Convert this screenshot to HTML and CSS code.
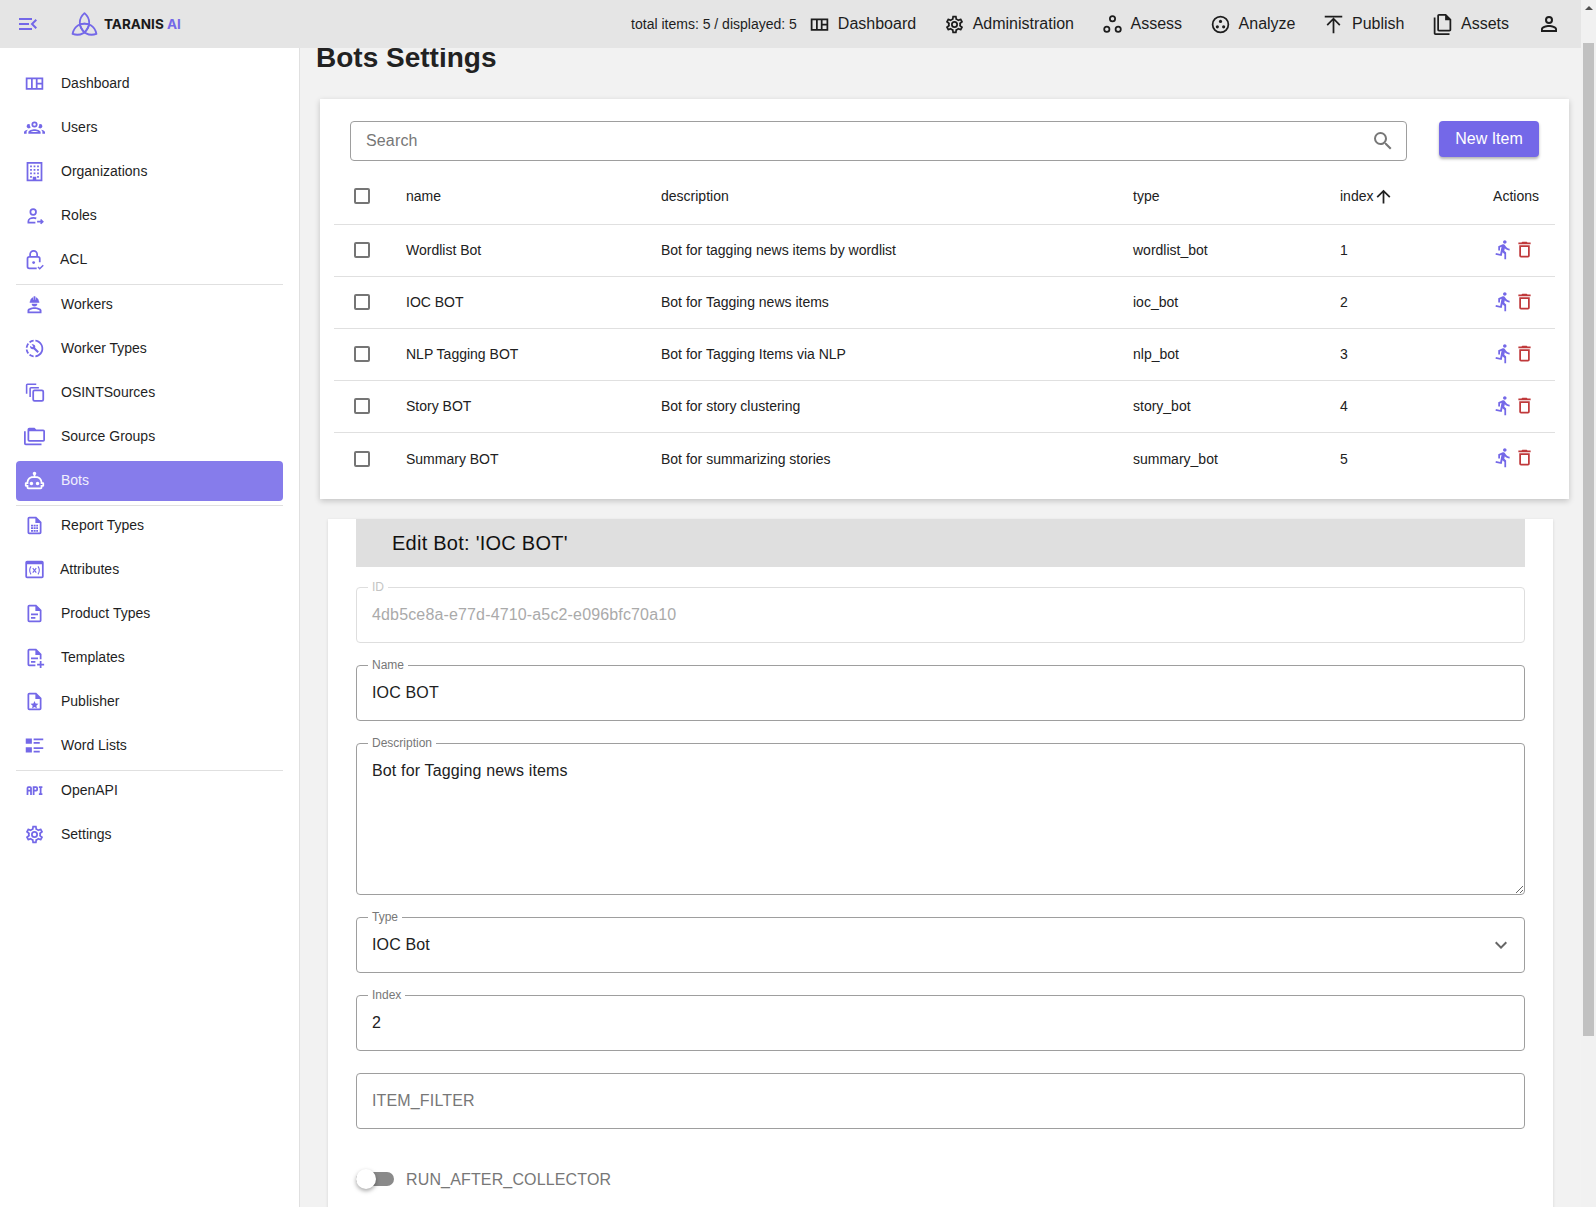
FILE: index.html

```html
<!DOCTYPE html>
<html lang="en">
<head>
    <meta charset="UTF-8">
    <meta name="viewport" content="width=device-width, initial-scale=1.0">
    <title>Bots Settings - Taranis AI</title>
    <link rel="stylesheet" href="styles.css">
</head>
<body>
    <!-- icons used more than once -->
    <svg class="sprite" xmlns="http://www.w3.org/2000/svg">
        <symbol id="i-dashboard" viewBox="0 0 24 24"><path fill-rule="evenodd" d="M2 5H22V19H2ZM4 7V17H8V7ZM10 7V17H13.500V7ZM15.500 7V11H20V7ZM15.500 13V17H20V13Z"/></symbol>
        <symbol id="i-cog" viewBox="0 0 24 24"><path d="M12,8A4,4 0 0,1 16,12A4,4 0 0,1 12,16A4,4 0 0,1 8,12A4,4 0 0,1 12,8M12,10A2,2 0 0,0 10,12A2,2 0 0,0 12,14A2,2 0 0,0 14,12A2,2 0 0,0 12,10M10,22C9.75,22 9.54,21.82 9.5,21.58L9.13,18.93C8.5,18.68 7.96,18.34 7.44,17.94L4.95,18.95C4.73,19.03 4.46,18.95 4.34,18.73L2.34,15.27C2.21,15.05 2.27,14.78 2.46,14.63L4.57,12.97L4.5,12L4.57,11L2.46,9.37C2.27,9.22 2.21,8.95 2.34,8.73L4.34,5.27C4.46,5.05 4.73,4.96 4.95,5.05L7.44,6.05C7.96,5.66 8.5,5.32 9.13,5.07L9.5,2.42C9.54,2.18 9.75,2 10,2H14C14.25,2 14.46,2.18 14.5,2.42L14.87,5.07C15.5,5.32 16.04,5.66 16.56,6.05L19.05,5.05C19.27,4.96 19.54,5.05 19.66,5.27L21.66,8.73C21.79,8.95 21.73,9.22 21.54,9.37L19.43,11L19.5,12L19.43,13L21.54,14.63C21.73,14.78 21.79,15.05 21.66,15.27L19.66,18.73C19.54,18.95 19.27,19.04 19.05,18.95L16.56,17.95C16.04,18.34 15.5,18.68 14.87,18.93L14.5,21.58C14.46,21.82 14.25,22 14,22H10M11.25,4L10.88,6.61C9.68,6.86 8.62,7.5 7.85,8.39L5.44,7.35L4.69,8.65L6.8,10.2C6.4,11.37 6.4,12.64 6.8,13.8L4.68,15.36L5.43,16.66L7.86,15.62C8.63,16.5 9.68,17.14 10.87,17.38L11.24,20H12.76L13.13,17.39C14.32,17.14 15.37,16.5 16.14,15.62L18.57,16.66L19.32,15.36L17.2,13.81C17.6,12.64 17.6,11.37 17.2,10.2L19.31,8.65L18.56,7.35L16.15,8.39C15.38,7.5 14.32,6.86 13.12,6.62L12.75,4H11.25Z"/></symbol>
        <symbol id="i-run" viewBox="0 0 24 24"><path d="M13.5,5.5C14.59,5.5 15.5,4.59 15.5,3.5C15.5,2.39 14.59,1.5 13.5,1.5C12.39,1.5 11.5,2.39 11.5,3.5C11.5,4.59 12.39,5.5 13.5,5.5M9.89,19.38L10.89,15L13,17V23H15V15.5L12.89,13.5L13.5,10.5C14.79,12 16.79,13 19,13V11C17.09,11 15.5,10 14.69,8.58L13.69,7C13.29,6.38 12.69,6 12,6C11.69,6 11.5,6.08 11.19,6.08L6,8.28V13H8V9.58L9.79,8.88L8.19,17L3.29,16L2.89,18L9.89,19.38Z"/></symbol>
        <symbol id="i-delete" viewBox="0 0 24 24"><path d="M6,19A2,2 0 0,0 8,21H16A2,2 0 0,0 18,19V7H6V19M8,9H16V19H8V9M15.5,4L14.5,3H9.5L8.5,4H5V6H19V4H15.5Z"/></symbol>
    </svg>

    <div class="app">
        <div class="viewport">
            <header class="topbar">
                <svg class="icon-24 menu-toggle" viewBox="0 0 24 24"><path d="M21,15.61L19.59,17L14.58,12L19.59,7L21,8.39L17.44,12L21,15.61M3,6H16V8H3V6M3,13V11H13V13H3M3,18V16H16V18H3Z"/></svg>
                <div class="logo">
                    <svg class="logo-mark line" viewBox="0 0 27 25" stroke-width="1.800" stroke-linejoin="round">
                        <path d="M13.500 1.200C19.500 6.500 20 14 13.500 20.500C7 14 7.500 6.500 13.500 1.200Z"/>
                        <path d="M13.500 1.200C19.500 6.500 20 14 13.500 20.500C7 14 7.500 6.500 13.500 1.200Z" transform="rotate(120 13.500 15)"/>
                        <path d="M13.500 1.200C19.500 6.500 20 14 13.500 20.500C7 14 7.500 6.500 13.500 1.200Z" transform="rotate(240 13.500 15)"/>
                    </svg>
                    <span class="logo-name">TARANIS <span class="logo-ai">AI</span></span>
                </div>
                <div class="topbar-right">
                    <span class="item-count">total items: 5 / displayed: 5</span>
                    <a class="top-link"><svg class="icon-21"><use href="#i-dashboard"/></svg>Dashboard</a>
                    <a class="top-link"><svg class="icon-21"><use href="#i-cog"/></svg>Administration</a>
                    <a class="top-link"><svg class="icon-21 line" viewBox="0 0 24 24" stroke-width="2"><circle cx="12" cy="5.5" r="3"/><circle cx="5.5" cy="17.5" r="3"/><circle cx="18.5" cy="17.5" r="3"/></svg>Assess</a>
                    <a class="top-link"><svg class="icon-21" viewBox="0 0 24 24"><path fill-rule="evenodd" d="M12 2a10 10 0 1 0 0 20a10 10 0 1 0 0-20ZM12 4a8 8 0 1 1 0 16a8 8 0 1 1 0-16Z"/><circle cx="12" cy="8.5" r="1.8"/><circle cx="8.4" cy="14.7" r="1.8"/><circle cx="15.6" cy="14.7" r="1.8"/></svg>Analyze</a>
                    <a class="top-link"><svg class="icon-21" viewBox="0 0 24 24"><path d="M4.08,11.92L12,4L19.92,11.92L18.5,13.33L13,7.83V22H11V7.83L5.5,13.33L4.08,11.92M12,4H22V2H2V4H12Z"/></svg>Publish</a>
                    <a class="top-link"><svg class="icon-21" viewBox="0 0 24 24"><path d="M16 0H8C6.9 0 6 .9 6 2V18C6 19.1 6.9 20 8 20H20C21.1 20 22 19.1 22 18V6L16 0M20 18H8V2H15V7H20V18M4 4V22H20V24H4C2.9 24 2 23.1 2 22V4H4Z"/></svg>Assets</a>
                    <svg class="icon-24 account" viewBox="0 0 24 24"><path d="M12,4A4,4 0 0,1 16,8A4,4 0 0,1 12,12A4,4 0 0,1 8,8A4,4 0 0,1 12,4M12,6A2,2 0 0,0 10,8A2,2 0 0,0 12,10A2,2 0 0,0 14,8A2,2 0 0,0 12,6M12,13C14.67,13 20,14.33 20,17V20H4V17C4,14.33 9.33,13 12,13M12,14.9C9.03,14.9 5.9,16.36 5.9,17V18.1H18.1V17C18.1,16.36 14.97,14.9 12,14.9Z"/></svg>
                </div>
            </header>

            <div class="below">
                <nav class="sidebar">
                    <a class="nav-item"><svg class="icon-21"><use href="#i-dashboard"/></svg>Dashboard</a>
                    <a class="nav-item"><svg class="icon-21" viewBox="0 0 24 24"><path d="M12,5A3.5,3.5 0 0,0 8.5,8.5A3.5,3.5 0 0,0 12,12A3.5,3.5 0 0,0 15.5,8.5A3.5,3.5 0 0,0 12,5M12,7A1.5,1.5 0 0,1 13.5,8.5A1.5,1.5 0 0,1 12,10A1.5,1.5 0 0,1 10.5,8.5A1.5,1.5 0 0,1 12,7M5.5,8A2.5,2.5 0 0,0 3,10.5C3,11.44 3.53,12.25 4.29,12.68C4.65,12.88 5.06,13 5.5,13C5.94,13 6.35,12.88 6.71,12.68C7.08,12.47 7.39,12.17 7.62,11.81C6.89,10.86 6.5,9.7 6.5,8.5C6.5,8.41 6.5,8.31 6.5,8.22C6.2,8.08 5.86,8 5.5,8M18.5,8C18.14,8 17.8,8.08 17.5,8.22C17.5,8.31 17.5,8.41 17.5,8.5C17.5,9.7 17.11,10.86 16.38,11.81C16.5,12 16.63,12.15 16.78,12.3C16.94,12.45 17.1,12.58 17.29,12.68C17.65,12.88 18.06,13 18.5,13C18.94,13 19.35,12.88 19.71,12.68C20.47,12.25 21,11.44 21,10.5A2.5,2.5 0 0,0 18.5,8M12,14C9.66,14 5,15.17 5,17.5V19H19V17.5C19,15.17 14.34,14 12,14M4.71,14.55C2.78,14.78 0,15.76 0,17.5V19H3V17.07C3,16.06 3.69,15.22 4.71,14.55M19.29,14.55C20.31,15.22 21,16.06 21,17.07V19H24V17.5C24,15.76 21.22,14.78 19.29,14.55M12,16C13.53,16 15.24,16.5 16.23,17H7.77C8.76,16.5 10.47,16 12,16Z"/></svg>Users</a>
                    <a class="nav-item"><svg class="icon-21" viewBox="0 0 24 24"><path fill-rule="evenodd" d="M3 1H21V23H3ZM5 3V21H10V18H14V21H19V3Z"/><path d="M7 5h2v2H7zM11 5h2v2h-2zM15 5h2v2h-2zM7 9h2v2H7zM11 9h2v2h-2zM15 9h2v2h-2zM7 13h2v2H7zM11 13h2v2h-2zM15 13h2v2h-2zM7 17h2v2H7zM15 17h2v2h-2z"/></svg>Organizations</a>
                    <a class="nav-item"><svg class="icon-21 line" viewBox="0 0 24 24" stroke-width="2"><circle cx="10.5" cy="8" r="3.2"/><path d="M13 20H5v-1.5c0-2.2 3-3.7 6-3.7c1 0 2 .2 3 .5"/><path d="M15 19h6M19 16.5l2.5 2.5l-2.5 2.5" stroke-width="1.8"/></svg>Roles</a>
                    <a class="nav-item nav-item-tight"><svg class="icon-21 line" viewBox="0 0 24 24" stroke-width="2"><path d="M14.5 22H6a2 2 0 0 1-2-2V11a2 2 0 0 1 2-2h10a2 2 0 0 1 2 2v4"/><path d="M7 9V6a4 4 0 0 1 8 0v3"/><circle cx="11" cy="15.5" r="1.6" fill="currentColor" stroke="none"/><path d="M16 20.5l2 2l4-4" stroke-width="1.7"/></svg>ACL</a>
                    <div class="nav-divider"></div>
                    <a class="nav-item"><svg class="icon-21" viewBox="0 0 24 24"><path d="M7 8.5C7 6 8.8 4.300 10.500 3.800V6.500H11V2.500H13V6.500H13.500V3.800C15.200 4.300 17 6 17 8.500H17.500V10H6.500V8.500ZM8.800 11H15.200C15.200 13 13.800 14.200 12 14.200C10.200 14.200 8.800 13 8.800 11Z"/><path fill-rule="evenodd" d="M12 15C8.500 15 4 16.500 4 18.500V22H20V18.500C20 16.500 15.500 15 12 15ZM12 17C14.600 17 17 17.800 17.900 18.800V20H6.100V18.800C7 17.800 9.400 17 12 17Z"/></svg>Workers</a>
                    <a class="nav-item"><svg class="icon-21" viewBox="0 0 24 24"><path d="M13 2.03V4.05C17.39 4.59 20.5 8.58 19.96 12.97C19.5 16.61 16.64 19.5 13 19.93V21.93C18.5 21.38 22.5 16.5 21.95 11C21.5 6.25 17.73 2.5 13 2.03M11 2.06C9.05 2.25 7.19 3 5.67 4.26L7.1 5.74C8.22 4.84 9.57 4.26 11 4.06V2.06M4.26 5.67C3 7.19 2.25 9.04 2.05 11H4.05C4.24 9.58 4.8 8.23 5.69 7.1L4.26 5.67M2.06 13C2.26 14.96 3.03 16.81 4.27 18.33L5.69 16.9C4.81 15.77 4.24 14.42 4.06 13H2.06M7.1 18.37L5.67 19.74C7.18 21 9.04 21.79 11 22V20C9.58 19.82 8.23 19.25 7.1 18.37M16.82 15.19L12.71 11.08C13.12 10.04 12.89 8.82 12.03 7.97C11.13 7.06 9.78 6.88 8.69 7.38L10.63 9.32L9.28 10.68L7.29 8.73C6.75 9.82 7 11.17 7.88 12.08C8.74 12.94 9.96 13.16 11 12.76L15.11 16.86C15.29 17.05 15.56 17.05 15.74 16.86L16.78 15.83C17 15.65 17 15.33 16.82 15.19Z"/></svg>Worker Types</a>
                    <a class="nav-item"><svg class="icon-21 line" viewBox="0 0 24 24" stroke-width="1.800"><rect x="10.500" y="9.500" width="11.500" height="12" rx="1.500" stroke-width="2"/><path d="M7 17V7.500a1 1 0 0 1 1-1H17"/><path d="M3 13.500V3.500a1 1 0 0 1 1-1H14"/></svg>OSINTSources</a>
                    <a class="nav-item"><svg class="icon-21" viewBox="0 0 24 24"><path d="M22,4A2,2 0 0,1 24,6V16A2,2 0 0,1 22,18H6A2,2 0 0,1 4,16V4A2,2 0 0,1 6,2H12L14,4H22M2,6V20H20V22H2A2,2 0 0,1 0,20V11H0V6H2M6,6V16H22V6H6Z"/></svg>Source Groups</a>
                    <a class="nav-item active"><svg class="icon-21" viewBox="0 0 24 24"><path d="M17.5 15.5C17.5 16.61 16.61 17.5 15.5 17.5S13.5 16.61 13.5 15.5 14.4 13.5 15.5 13.5 17.5 14.4 17.5 15.5M8.5 13.5C7.4 13.5 6.5 14.4 6.5 15.5S7.4 17.5 8.5 17.5 10.5 16.61 10.5 15.5 9.61 13.5 8.5 13.5M23 15V18C23 18.55 22.55 19 22 19H21V20C21 21.11 20.11 22 19 22H5C3.9 22 3 21.11 3 20V19H2C1.45 19 1 18.55 1 18V15C1 14.45 1.45 14 2 14H3C3 10.13 6.13 7 10 7H11V5.73C10.4 5.39 10 4.74 10 4C10 2.9 10.9 2 12 2S14 2.9 14 4C14 4.74 13.6 5.39 13 5.73V7H14C17.87 7 21 10.13 21 14H22C22.55 14 23 14.45 23 15M21 16H19V14C19 11.24 16.76 9 14 9H10C7.24 9 5 11.24 5 14V16H3V17H5V20H19V17H21V16Z"/></svg>Bots</a>
                    <div class="nav-divider"></div>
                    <a class="nav-item"><svg class="icon-21" viewBox="0 0 24 24"><path d="M14,2H6A2,2 0 0,0 4,4V20A2,2 0 0,0 6,22H18A2,2 0 0,0 20,20V8L14,2M18,20H6V4H13V9H18V20Z"/><path d="M8 11h2.300v2H8zM11 11h2.300v2H11zM14 11h2v2h-2zM8 14h2.300v2H8zM11 14h2.300v2H11zM14 14h2v2h-2zM8 17h2.300v2H8zM11 17h2.300v2H11zM14 17h2v2h-2z"/></svg>Report Types</a>
                    <a class="nav-item nav-item-tight"><svg class="icon-21" viewBox="0 0 24 24"><path fill-rule="evenodd" d="M3.500 2H20.500A2 2 0 0 1 22.500 4V20A2 2 0 0 1 20.500 22H3.500A2 2 0 0 1 1.500 20V4A2 2 0 0 1 3.500 2ZM3.500 6V20H20.500V6Z"/><path d="M8 8.500C6.300 11 6.300 15 8 17.500" fill="none" stroke="currentColor" stroke-width="1.300"/><path d="M16 8.500C17.700 11 17.700 15 16 17.500" fill="none" stroke="currentColor" stroke-width="1.300"/><path d="M10 10.500L14 15.500M14 10.500L10 15.500" fill="none" stroke="currentColor" stroke-width="1.300"/></svg>Attributes</a>
                    <a class="nav-item"><svg class="icon-21" viewBox="0 0 24 24"><path d="M14,2H6A2,2 0 0,0 4,4V20A2,2 0 0,0 6,22H18A2,2 0 0,0 20,20V8L14,2M18,20H6V4H13V9H18V20Z"/><path d="M8 12h8v2H8zM8 16h5v2H8z"/></svg>Product Types</a>
                    <a class="nav-item"><svg class="icon-21" viewBox="0 0 24 24"><path d="M14,2H6A2,2 0 0,0 4,4V20A2,2 0 0,0 6,22H13V20H6V4H13V9H18V14H20V8L14,2Z"/><path d="M8 12h8v2H8zM8 16h5v2H8zM18 16h2v3h3v2h-3v3h-2v-3h-3v-2h3z"/></svg>Templates</a>
                    <a class="nav-item"><svg class="icon-21" viewBox="0 0 24 24"><path d="M14,2H6A2,2 0 0,0 4,4V20A2,2 0 0,0 6,22H18A2,2 0 0,0 20,20V8L14,2M18,20H6V4H13V9H18V20Z"/><path d="M12 11.500l1.300 2.900l3.200 .3l-2.400 2.100l.7 3.100l-2.800-1.600l-2.800 1.600l.7-3.100l-2.400-2.100l3.200-.3z"/></svg>Publisher</a>
                    <a class="nav-item"><svg class="icon-21" viewBox="0 0 24 24"><path d="M2 4h7v6H2zM2 14h7v6H2zM11 4h11v2H11zM11 8h7v2h-7zM11 14h11v2H11zM11 18h7v2h-7z"/></svg>Word Lists</a>
                    <div class="nav-divider"></div>
                    <a class="nav-item"><svg class="icon-21" viewBox="0 0 24 24"><path d="M7 7H5A2 2 0 0 0 3 9V17H5V13H7V17H9V9A2 2 0 0 0 7 7M7 11H5V9H7M14 7H10V17H12V13H14A2 2 0 0 0 16 11V9A2 2 0 0 0 14 7M14 11H12V9H14M20 9V15H21V17H17V15H18V9H17V7H21V9Z"/></svg>OpenAPI</a>
                    <a class="nav-item"><svg class="icon-21"><use href="#i-cog"/></svg>Settings</a>
                </nav>

                <main class="content">
                    <h1 class="page-title">Bots Settings</h1>

                    <section class="list-card">
                        <div class="list-toolbar">
                            <div class="search-box">
                                <span>Search</span>
                                <svg class="icon-24" viewBox="0 0 24 24"><path d="M9.5,3A6.5,6.5 0 0,1 16,9.5C16,11.11 15.41,12.59 14.44,13.73L14.71,14H15.5L20.5,19L19,20.5L14,15.5V14.71L13.73,14.44C12.59,15.41 11.11,16 9.5,16A6.5,6.5 0 0,1 3,9.5A6.5,6.5 0 0,1 9.5,3M9.5,5C7,5 5,7 5,9.5C5,12 7,14 9.5,14C12,14 14,12 14,9.5C14,7 12,5 9.5,5Z"/></svg>
                            </div>
                            <button class="btn-new">New Item</button>
                        </div>

                        <table class="bots-table">
                            <colgroup>
                                <col class="col-check"><col class="col-name"><col class="col-desc"><col class="col-type"><col class="col-index"><col>
                            </colgroup>
                            <thead>
                                <tr>
                                    <th class="cell-check"><span class="checkbox"></span></th>
                                    <th>name</th>
                                    <th>description</th>
                                    <th>type</th>
                                    <th><span class="sort-head">index<svg class="icon-21" viewBox="0 0 24 24"><path d="M13,20H11V8L5.5,13.5L4.08,12.08L12,4.16L19.92,12.08L18.5,13.5L13,8V20Z"/></svg></span></th>
                                    <th class="cell-actions">Actions</th>
                                </tr>
                            </thead>
                            <tbody>
                                <tr>
                                    <td class="cell-check"><span class="checkbox"></span></td>
                                    <td>Wordlist Bot</td>
                                    <td>Bot for tagging news items by wordlist</td>
                                    <td>wordlist_bot</td>
                                    <td>1</td>
                                    <td class="cell-actions"><span class="actions"><svg class="icon-21 run"><use href="#i-run"/></svg><svg class="icon-21 del"><use href="#i-delete"/></svg></span></td>
                                </tr>
                                <tr>
                                    <td class="cell-check"><span class="checkbox"></span></td>
                                    <td>IOC BOT</td>
                                    <td>Bot for Tagging news items</td>
                                    <td>ioc_bot</td>
                                    <td>2</td>
                                    <td class="cell-actions"><span class="actions"><svg class="icon-21 run"><use href="#i-run"/></svg><svg class="icon-21 del"><use href="#i-delete"/></svg></span></td>
                                </tr>
                                <tr>
                                    <td class="cell-check"><span class="checkbox"></span></td>
                                    <td>NLP Tagging BOT</td>
                                    <td>Bot for Tagging Items via NLP</td>
                                    <td>nlp_bot</td>
                                    <td>3</td>
                                    <td class="cell-actions"><span class="actions"><svg class="icon-21 run"><use href="#i-run"/></svg><svg class="icon-21 del"><use href="#i-delete"/></svg></span></td>
                                </tr>
                                <tr>
                                    <td class="cell-check"><span class="checkbox"></span></td>
                                    <td>Story BOT</td>
                                    <td>Bot for story clustering</td>
                                    <td>story_bot</td>
                                    <td>4</td>
                                    <td class="cell-actions"><span class="actions"><svg class="icon-21 run"><use href="#i-run"/></svg><svg class="icon-21 del"><use href="#i-delete"/></svg></span></td>
                                </tr>
                                <tr>
                                    <td class="cell-check"><span class="checkbox"></span></td>
                                    <td>Summary BOT</td>
                                    <td>Bot for summarizing stories</td>
                                    <td>summary_bot</td>
                                    <td>5</td>
                                    <td class="cell-actions"><span class="actions"><svg class="icon-21 run"><use href="#i-run"/></svg><svg class="icon-21 del"><use href="#i-delete"/></svg></span></td>
                                </tr>
                            </tbody>
                        </table>
                    </section>

                    <section class="edit-card">
                        <h2 class="edit-title">Edit Bot: 'IOC BOT'</h2>
                        <div class="form">
                            <div class="field field-disabled">
                                <span class="field-label">ID</span>
                                4db5ce8a-e77d-4710-a5c2-e096bfc70a10
                            </div>
                            <div class="field">
                                <span class="field-label">Name</span>
                                IOC BOT
                            </div>
                            <div class="field field-area">
                                <span class="field-label">Description</span>
                                <textarea class="area-input" readonly>Bot for Tagging news items</textarea>
                            </div>
                            <div class="field field-select">
                                <span class="field-label">Type</span>
                                IOC Bot
                                <svg class="icon-24" viewBox="0 0 24 24"><path d="M7.41,8.58L12,13.17L16.59,8.58L18,10L12,16L6,10L7.41,8.58Z"/></svg>
                            </div>
                            <div class="field">
                                <span class="field-label">Index</span>
                                2
                            </div>
                            <div class="field field-empty">ITEM_FILTER</div>
                            <div class="switch-row">
                                <span class="switch"><span class="switch-thumb"></span></span>
                                <span class="switch-label">RUN_AFTER_COLLECTOR</span>
                            </div>
                        </div>
                    </section>
                </main>
            </div>
        </div>

        <div class="scrollbar">
            <span class="scroll-arrow"></span>
            <span class="scroll-thumb"></span>
        </div>
    </div>
</body>
</html>
```

FILE: styles.css

```css
html, body {
    margin: 0;
    height: 100%;
    overflow: hidden;
}
body {
    font-family: "Liberation Sans", Arial, sans-serif;
    font-size: 14px;
    color: #212121;
    background-color: #f2f2f2;
}
svg {
    fill: currentColor;
    flex: none;
}
svg.line {
    fill: none;
    stroke: currentColor;
}
.sprite {
    display: none;
}
.icon-21 {
    width: 21px;
    height: 21px;
}
.icon-24 {
    width: 24px;
    height: 24px;
}

.app {
    display: flex;
    height: 1207px;
    overflow: hidden;
}
.viewport {
    flex: 1;
    min-width: 0;
    display: flex;
    flex-direction: column;
}

/* top bar */
.topbar {
    position: relative;
    z-index: 2;
    flex: none;
    height: 48px;
    display: flex;
    align-items: center;
    background-color: #e5e5e5;
    color: #1d1d1d;
}
.menu-toggle {
    margin-left: 16px;
    color: #7468e8;
}
.logo {
    display: flex;
    align-items: center;
    margin-left: 31px;
}
.logo-mark {
    width: 27px;
    height: 25px;
    color: #7468e8;
}
.logo-name {
    margin-left: 6px;
    font-family: Inter, "Liberation Sans", sans-serif;
    font-size: 13.5px;
    font-weight: 700;
    color: #1a1a1a;
}
.logo-ai {
    color: #7468e8;
}
.topbar-right {
    margin-left: auto;
    display: flex;
    align-items: center;
    padding-right: 20px;
}
.item-count {
    margin-right: 12px;
}
.top-link {
    display: flex;
    align-items: center;
    gap: 8px;
    margin-right: 27.5px;
    font-size: 16px;
}
.top-link:nth-last-of-type(1) {
    margin-right: 27px;
}
.account {
    margin-left: 1px;
}

/* side navigation */
.below {
    flex: 1;
    min-height: 0;
    display: flex;
}
.sidebar {
    flex: none;
    box-sizing: border-box;
    width: 300px;
    padding: 16px 16px 0;
    background: #fff;
    border-right: 1px solid #e0e0e0;
}
.nav-item {
    box-sizing: border-box;
    display: flex;
    align-items: center;
    gap: 16px;
    height: 40px;
    margin-bottom: 4px;
    padding: 0 0 2px 8px;
    border-radius: 4px;
    color: #1f1f1f;
}
.nav-item svg {
    color: #7468e8;
}
.nav-item-tight {
    gap: 15px;
}
.nav-item.active {
    background-color: #867ceb;
    color: #f1effd;
}
.nav-item.active svg {
    color: #fff;
}
.nav-divider {
    height: 1px;
    background-color: #e0e0e0;
}

/* main column */
.content {
    flex: 1;
    min-width: 0;
}
.page-title {
    margin: 0 0 31px 16px;
    font-size: 28px;
    line-height: 20px;
    font-weight: 700;
    color: #222;
}
.list-card {
    margin: 0 12px 20px 20px;
    padding: 22px 14px 14px;
    background: #fff;
    box-shadow: 0 2px 6px rgba(0, 0, 0, .2);
}
.list-toolbar {
    display: flex;
    align-items: flex-start;
    gap: 32px;
    padding: 0 16px;
    margin-bottom: 7px;
}
.search-box {
    flex: 1;
    height: 40px;
    box-sizing: border-box;
    display: flex;
    align-items: center;
    justify-content: space-between;
    padding: 0 11px 0 15px;
    border: 1px solid #9e9e9e;
    border-radius: 4px;
    font-size: 16px;
    letter-spacing: .15px;
    color: #777;
}
.btn-new {
    width: 100px;
    height: 36px;
    padding: 0;
    border: none;
    border-radius: 4px;
    background-color: #7468e8;
    color: #fff;
    font-family: inherit;
    font-size: 16px;
    box-shadow: 0 2px 3px rgba(0, 0, 0, .3);
}

.bots-table {
    width: 100%;
    table-layout: fixed;
    border-collapse: separate;
    border-spacing: 0;
}
.col-check { width: 56px; }
.col-name { width: 255px; }
.col-desc { width: 472px; }
.col-type { width: 207px; }
.col-index { width: 120px; }
.bots-table th, .bots-table td {
    box-sizing: border-box;
    padding: 0 16px;
    text-align: left;
    font-weight: 400;
    border-bottom: 1px solid #e0e0e0;
}
.bots-table th {
    height: 57px;
}
.bots-table td {
    height: 52px;
    padding-bottom: 2px;
}
.bots-table tbody tr:last-child td {
    border-bottom: none;
    padding-bottom: 0;
}
.bots-table tbody tr:last-child .cell-actions {
    padding-bottom: 3px;
}
.bots-table .cell-check {
    padding-left: 20px;
    padding-right: 0;
}
.bots-table .cell-actions {
    text-align: right;
}
.checkbox {
    display: block;
    box-sizing: border-box;
    width: 16px;
    height: 16px;
    border: 2px solid #757575;
    border-radius: 2px;
}
.sort-head {
    display: flex;
    align-items: center;
}
.actions {
    display: flex;
    justify-content: flex-end;
    padding-right: 4px;
}
.run {
    color: #7468e8;
}
.del {
    color: #c0393b;
}

/* edit form */
.edit-card {
    margin: 0 28px;
    padding: 0 28px 40px;
    background: #fff;
    box-shadow: 0 1px 3px rgba(0, 0, 0, .12);
}
.edit-title {
    margin: 0 0 20px;
    height: 48px;
    padding-left: 36px;
    line-height: 48px;
    font-size: 20px;
    font-weight: 400;
    letter-spacing: .25px;
    color: #111;
    background-color: #dfdfdf;
}
.form {
    display: flex;
    flex-direction: column;
    gap: 22px;
}
.field {
    position: relative;
    box-sizing: border-box;
    height: 56px;
    display: flex;
    align-items: center;
    justify-content: space-between;
    padding: 0 11px 0 15px;
    border: 1px solid #9e9e9e;
    border-radius: 4px;
    font-size: 16px;
    letter-spacing: .15px;
    color: #212121;
}
.field-label {
    position: absolute;
    top: -8px;
    left: 11px;
    padding: 0 4px;
    background: #fff;
    font-size: 12px;
    line-height: 14px;
    letter-spacing: 0;
    color: #777;
}
.field-disabled {
    border-color: #dedede;
    color: #aaa;
}
.field-disabled .field-label {
    color: #c4c4c4;
}
.field-area {
    height: 152px;
    padding: 0;
}
.area-input {
    display: block;
    box-sizing: border-box;
    width: 100%;
    height: 100%;
    padding: 15px 15px 0;
    border: none;
    border-radius: 4px;
    outline: none;
    resize: vertical;
    background: transparent;
    font-family: inherit;
    font-size: 16px;
    letter-spacing: .15px;
    line-height: 24px;
    color: #212121;
}
.field-select svg {
    color: #666;
}
.field-empty {
    color: #777;
}
.switch-row {
    display: flex;
    align-items: center;
    gap: 12px;
    margin-top: 18px;
    height: 20px;
    font-size: 16px;
    letter-spacing: .15px;
    color: #777;
}
.switch-label {
    padding-top: 1px;
}
.switch {
    position: relative;
    display: block;
    width: 38px;
    height: 14px;
    border-radius: 7px;
    background-color: #8a8a8a;
}
.switch-thumb {
    position: absolute;
    top: -3px;
    left: 0;
    width: 20px;
    height: 20px;
    border-radius: 50%;
    background: #fff;
    box-shadow: 0 2px 4px rgba(0, 0, 0, .35);
}

/* window scrollbar */
.scrollbar {
    flex: none;
    width: 15px;
    background-color: #f1f1f1;
    display: flex;
    flex-direction: column;
    align-items: center;
}
.scroll-arrow {
    width: 0;
    height: 0;
    margin-top: 6px;
    border-left: 4px solid transparent;
    border-right: 4px solid transparent;
    border-bottom: 4px solid #505050;
}
.scroll-thumb {
    width: 11px;
    height: 993px;
    margin-top: 33px;
    background-color: #c1c1c1;
}
```
